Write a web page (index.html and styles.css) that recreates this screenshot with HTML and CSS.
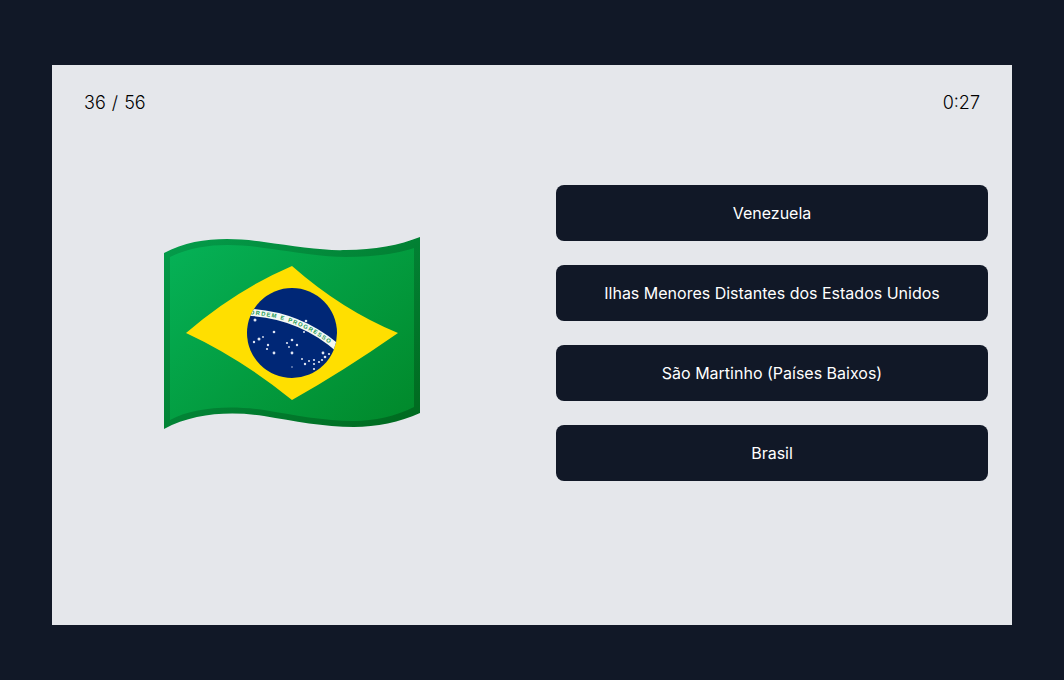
FILE: index.html
```html
<!DOCTYPE html>
<html lang="pt">
<head>
<meta charset="utf-8">
<title>Bandeiras</title>
<link rel="stylesheet" href="styles.css">
</head>
<body>
<div class="panel">
  <header class="status">
    <span>36 / 56</span>
    <span>0:27</span>
  </header>
  <main class="quiz">
    <div class="flag-col">
      <svg class="flag" viewBox="0 0 256 256" width="256" height="256" aria-label="Bandeira do Brasil">
        <defs>
          <linearGradient id="outer" x1="40" y1="20" x2="215" y2="235" gradientUnits="userSpaceOnUse">
            <stop class="o1" offset="0"/>
            <stop class="o2" offset="1"/>
          </linearGradient>
          <linearGradient id="inner" x1="40" y1="25" x2="215" y2="230" gradientUnits="userSpaceOnUse">
            <stop class="i1" offset="0"/>
            <stop class="i2" offset="1"/>
          </linearGradient>
          <clipPath id="globe"><circle cx="128" cy="128" r="45"/></clipPath>
        </defs>
        <path class="edge" d="M0 48C30 32 66 32 100 37C130 41 160 46 182 45C210 45 236 40 256 32V208C236 217 212 222 190 222C160 222 130 216 100 211C66 206 30 208 0 224Z"/>
        <path class="field" d="M6 52C34 38 68 38 100 43C130 47 160 52 182 52C208 52 232 49 250 43V202C232 211 210 216 190 216C160 216 130 210 100 205C66 200 30 202 6 215Z"/>
        <path class="rhomb" d="M128 61Q178 105 234 128Q178 167 128 195Q76 153 22 128Q72 85 128 61Z"/>
        <circle class="globe" cx="128" cy="128" r="45"/>
        <g clip-path="url(#globe)">
          <path id="band" class="band" d="M78 107Q135 108 176 145"/>
          <text class="motto"><textPath href="#band" startOffset="8">ORDEM E PROGRESSO</textPath></text>
        </g>
        <g class="stars">
          <circle cx="91" cy="115" r="1.5"/><circle cx="95" cy="134" r="1.5"/><circle cx="90" cy="137" r="1.2"/><circle cx="99" cy="132" r=".9"/>
          <circle cx="104" cy="140" r="1.2"/><circle cx="103" cy="144" r="1.1"/><circle cx="110" cy="127" r="1.3"/><circle cx="110" cy="148" r="1.4"/>
          <circle cx="128" cy="135" r="1.3"/><circle cx="123" cy="138" r="1.1"/><circle cx="133" cy="140" r="1.2"/><circle cx="125" cy="142" r=".9"/>
          <circle cx="128" cy="148" r="1.4"/><circle cx="128" cy="162" r=".7"/><circle cx="142" cy="116" r="1.3"/><circle cx="140" cy="127" r="1"/>
          <circle cx="138" cy="154" r="1"/><circle cx="145" cy="156" r="1"/><circle cx="150" cy="155" r="1.1"/><circle cx="155" cy="157" r="1.1"/>
          <circle cx="159" cy="148" r="1.4"/><circle cx="165" cy="149" r="1.1"/><circle cx="161" cy="152" r="1.3"/><circle cx="158" cy="155" r="1.1"/>
          <circle cx="150" cy="159" r="1.1"/><circle cx="141" cy="159" r="1.2"/><circle cx="150" cy="164" r="1.1"/>
        </g>
      </svg>
    </div>
    <div class="answers">
      <button class="answer" type="button">Venezuela</button>
      <button class="answer" type="button">Ilhas Menores Distantes dos Estados Unidos</button>
      <button class="answer" type="button">São Martinho (Países Baixos)</button>
      <button class="answer" type="button">Brasil</button>
    </div>
  </main>
</div>
</body>
</html>
```
FILE: styles.css
```css
* { box-sizing: border-box; }

html, body { height: 100%; }

body {
  margin: 0;
  padding: 65px 52px 55px;
  background: #111827;
  font-family: Inter, "Liberation Sans", sans-serif;
  overflow: hidden;
}

.panel {
  height: 560px;
  background: #e5e7eb;
  color: #111827;
}

.status {
  display: flex;
  justify-content: space-between;
  padding: 24px 32px 0;
  font-size: 18px;
  font-weight: 300;
  word-spacing: 1px;
  line-height: 28px;
  color: #000;
}

.quiz {
  display: grid;
  grid-template-columns: 1fr 1fr;
  align-items: center;
  padding-top: 68px;
}

.flag-col {
  display: flex;
  justify-content: center;
}

.flag { display: block; }

.o1 { stop-color: #049a49; }
.o2 { stop-color: #006b20; }
.i1 { stop-color: #05b055; }
.i2 { stop-color: #018a2c; }

.edge { fill: url(#outer); }
.field { fill: url(#inner); }
.rhomb { fill: #ffdf00; }
.globe { fill: #002776; }

.band {
  fill: none;
  stroke: #f4f8f4;
  stroke-width: 7;
}

.motto {
  fill: #1b9a55;
  font-family: "Liberation Sans", sans-serif;
  font-size: 5.8px;
  font-weight: 700;
  letter-spacing: 1.3px;
  dominant-baseline: central;
}

.stars { fill: #dfe5f3; }

.answers {
  display: flex;
  flex-direction: column;
  gap: 24px;
  padding: 0 24px;
}

.answer {
  height: 56px;
  border: 0;
  border-radius: 8px;
  background: #111827;
  color: #fff;
  font-family: inherit;
  font-size: 16px;
  font-weight: 400;
}
```
